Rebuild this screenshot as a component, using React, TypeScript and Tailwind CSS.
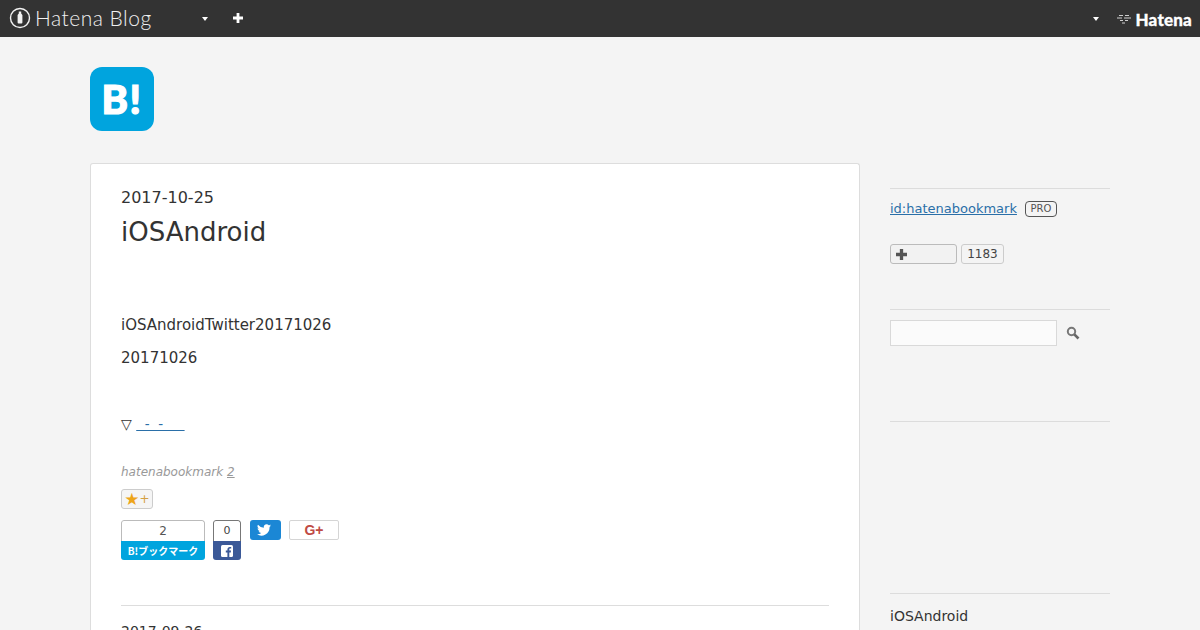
import React from "react";

const D = "font-['DejaVu_Sans',sans-serif]";

function HeaderBar() {
  return (
    <header className="flex h-[37px] items-center bg-[#333333] text-white">
      <svg width="22" height="22" viewBox="0 0 22 22" className="mb-[2px] ml-[9px] shrink-0">
        <circle cx="11" cy="11" r="9.5" fill="none" stroke="#f2f2f2" strokeWidth="1.4" />
        <path d="M9.8 4.500h2.400v2l1.200 1.600V15.500a1 1 0 0 1-1 1h-2.800a1 1 0 0 1-1-1V8.100l1.200-1.600z" fill="#f2f2f2" />
      </svg>
      <span className="mb-[3px] ml-[4px] w-[117px] font-['Lato',sans-serif] text-[21px] leading-none font-light tracking-[0.5px] text-[#f0f0f0]">Hatena Blog</span>
      <span className="ml-[50px] h-0 w-0 border-x-[3px] border-t-[4px] border-x-transparent border-t-white" />
      <svg width="10" height="10" viewBox="0 0 10 10" className="mb-[1px] ml-[25px]">
        <path d="M3.600 0h2.800v3.600H10v2.800H6.400V10H3.600V6.400H0V3.600h3.600z" fill="#fff" />
      </svg>
      <span className="mr-[17px] ml-auto h-0 w-0 border-x-[3px] border-t-[4px] border-x-transparent border-t-white" />
      <svg width="16" height="12" viewBox="0 0 16 12" className="mr-[3px]">
        <path d="M1 5h5M8 5h7M3 2.500h4M9 2.500h4M4 7.500h3M9 7.500h3M6 10h3" stroke="#cfcfcf" strokeWidth="1" fill="none" />
      </svg>
      <span className="mr-[8px] pt-[2px] font-['Lato',sans-serif] text-[17px] leading-none font-black tracking-[0.2px] text-white [-webkit-text-stroke:0.3px_white]">Hatena</span>
    </header>
  );
}

function Logo() {
  return (
    <div className="flex h-16 w-16 items-center justify-center rounded-[12px] bg-[#00a4de]">
      <span className="font-['Lato',sans-serif] text-[40px] leading-none font-black tracking-[1.5px] text-white [-webkit-text-stroke:1.2px_white]">B!</span>
    </div>
  );
}

function ShareRow() {
  return (
    <div className="mt-[11px] flex items-start">
      <div className="h-10 w-[84px] overflow-hidden rounded-[3px]">
        <div className="flex h-[21px] items-center justify-center rounded-t-[3px] border border-b-0 border-[#bbbbbb] bg-white text-[12px] text-[#555555]">2</div>
        <div className="flex h-[19px] items-center justify-center bg-[#00a4de] text-[10px] font-bold text-white">
          <span className="font-['Noto_Sans_CJK_JP',sans-serif]">B!ブックマーク</span>
        </div>
      </div>
      <div className="ml-2 h-10 w-7 overflow-hidden rounded-[3px]">
        <div className="flex h-[21px] items-center justify-center rounded-t-[3px] border border-b-0 border-[#777777] bg-white text-[11px] text-[#444444]">0</div>
        <div className="flex h-[19px] items-center justify-center bg-[#3b5998]">
          <svg width="12" height="12" viewBox="0 0 12 12">
            <rect width="12" height="12" rx="1.500" fill="#fff" />
            <path d="M8.300 12V7.400h1.500l.2-1.800H8.300V4.500c0-.5.2-.9.9-.9h1V2c-.2 0-.8-.1-1.400-.1-1.400 0-2.400.9-2.400 2.400v1.300H4.800v1.800h1.600V12z" fill="#3b5998" />
          </svg>
        </div>
      </div>
      <div className="ml-[9px] flex h-5 w-[31px] items-center justify-center rounded-[3px] bg-[#1b87d5] pr-[3px]">
        <svg width="14" height="12" viewBox="0 0 24 20">
          <path d="M24 2.400a10 10 0 0 1-2.800.8A5 5 0 0 0 23.300.5a10 10 0 0 1-3.100 1.200A4.900 4.900 0 0 0 11.800 6.200 14 14 0 0 1 1.700.9a4.900 4.900 0 0 0 1.500 6.600 5 5 0 0 1-2.200-.6c0 2.400 1.700 4.400 3.900 4.900a5 5 0 0 1-2.200.1 4.900 4.900 0 0 0 4.600 3.400A9.900 9.900 0 0 1 0 17.300 14 14 0 0 0 21.500 5 10 10 0 0 0 24 2.400z" fill="#fff" />
        </svg>
      </div>
      <div className="ml-2 flex h-5 w-[50px] items-center justify-center rounded-[2px] border border-[#d5d5d5] bg-white">
        <span className="font-['Liberation_Sans',sans-serif] text-[14px] leading-none font-bold text-[#c04a44]">G+</span>
      </div>
    </div>
  );
}

function Card() {
  return (
    <main className="h-[480px] w-[770px] shrink-0 overflow-hidden rounded-t-[3px] border border-b-0 border-[#dddddd] bg-white pt-[23px] pr-[30px] pl-[30px] text-[#333333]">
      <div className="text-[16px] leading-[22px]">2017-10-25</div>
      <h1 className="mt-[6px] text-[26px] leading-[34px] font-normal">iOSAndroid</h1>
      <p className="mt-[64px] text-[15px] leading-[24px]">iOSAndroidTwitter20171026</p>
      <p className="mt-[9px] text-[15px] leading-[24px]">20171026</p>
      <p className="mt-[42px] text-[14px] leading-[24px]">
        ▽ <a className="text-[13.5px] text-[#2a6fa8] underline">&nbsp;&nbsp;-&nbsp;&nbsp;-&nbsp;&nbsp;&nbsp;&nbsp;&nbsp;</a>
      </p>
      <p className="mt-[28px] text-[12px] leading-[16px] text-[#999999] italic">
        hatenabookmark <span className="underline">2</span>
      </p>
      <div className="mt-[9px] flex h-5 w-8 items-center justify-center rounded-[3px] border border-[#cccccc] bg-[#f5f5f5]">
        <span className="text-[17px] leading-none text-[#eda51a]">★</span>
        <span className="text-[12px] leading-none text-[#d4a043]">+</span>
      </div>
      <ShareRow />
      <hr className="mt-[45px] border-t border-[#dddddd]" />
      <div className="mt-[14px] text-[14px] leading-[22px]">2017-09-26</div>
    </main>
  );
}

function Sidebar() {
  return (
    <aside className="ml-[30px] h-[480px] w-[220px] shrink-0 overflow-hidden pt-[25px] text-[#333333]">
      <section className="h-[121px] border-t border-[#dcdcdc] pt-[11px]">
        <div className="flex h-[18px] items-center">
          <a className="text-[13px] leading-[18px] text-[#2a6fa8] underline">id:hatenabookmark</a>
          <span className="ml-[8px] flex h-[16px] w-[32px] items-center justify-center rounded-[4px] border border-[#555555] text-[10px] leading-none font-medium text-[#555555]">PRO</span>
        </div>
        <div className="mt-[26px] flex items-center">
          <button className="flex h-5 w-[67px] items-center rounded-[3px] border border-[#bbbbbb] bg-[#f2f2f2] pl-[5px]">
            <svg width="11" height="11" viewBox="0 0 10 10"><path d="M3.500 0h3v3.500H10v3H6.500V10h-3V6.500H0v-3h3.500z" fill="#555555" /></svg>
          </button>
          <span className="relative ml-[4px] flex h-5 w-[43px] items-center justify-center rounded-[3px] border border-[#cccccc] text-[12px] leading-none text-[#444444]">1183</span>
        </div>
      </section>
      <section className="h-[112px] border-t border-[#dcdcdc] pt-[10px]">
        <div className="flex items-center">
          <div className="h-[26px] w-[167px] border border-[#d9d9d9] bg-[#fbfbfb]" />
          <svg width="14" height="14" viewBox="0 0 14 14" className="ml-[9px]">
            <circle cx="5.500" cy="5.500" r="3.700" fill="none" stroke="#777777" strokeWidth="2" />
            <path d="M8.300 8.300 12.500 12.500" stroke="#666666" strokeWidth="2.600" />
          </svg>
        </div>
      </section>
      <section className="h-[172px] border-t border-[#dcdcdc]" />
      <section className="border-t border-[#dcdcdc] pt-[12px]">
        <div className="text-[14px] leading-[20px]">iOSAndroid</div>
      </section>
    </aside>
  );
}

export default function App() {
  return (
    <div className={`h-[630px] w-[1200px] overflow-hidden bg-[#f4f4f4] ${D}`}>
      <HeaderBar />
      <div className="ml-[90px] pt-[30px]">
        <Logo />
        <div className="mt-[32px] flex">
          <Card />
          <Sidebar />
        </div>
      </div>
    </div>
  );
}
